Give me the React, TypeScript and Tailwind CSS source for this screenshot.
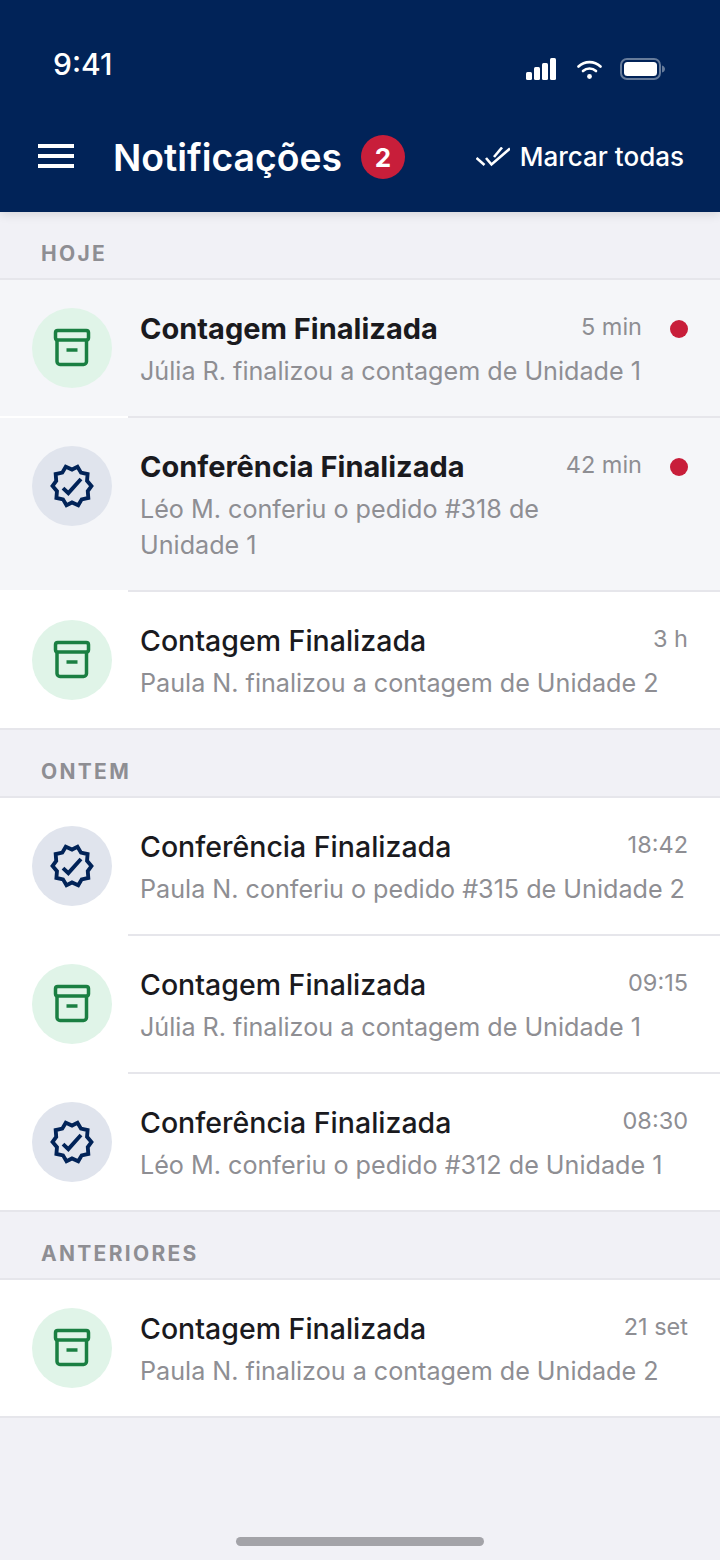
type Kind = "count" | "check";

interface Item {
  kind: Kind;
  title: string;
  desc: string;
  time: string;
  unread?: boolean;
  inset?: boolean;
}

const today: Item[] = [
  { kind: "count", title: "Contagem Finalizada", desc: "Júlia R. finalizou a contagem de Unidade 1", time: "5 min", unread: true, inset: true },
  { kind: "check", title: "Conferência Finalizada", desc: "Léo M. conferiu o pedido #318 de Unidade 1", time: "42 min", unread: true, inset: true },
  { kind: "count", title: "Contagem Finalizada", desc: "Paula N. finalizou a contagem de Unidade 2", time: "3 h" },
];

const yesterday: Item[] = [
  { kind: "check", title: "Conferência Finalizada", desc: "Paula N. conferiu o pedido #315 de Unidade 2", time: "18:42", inset: true },
  { kind: "count", title: "Contagem Finalizada", desc: "Júlia R. finalizou a contagem de Unidade 1", time: "09:15", inset: true },
  { kind: "check", title: "Conferência Finalizada", desc: "Léo M. conferiu o pedido #312 de Unidade 1", time: "08:30" },
];

const older: Item[] = [
  { kind: "count", title: "Contagem Finalizada", desc: "Paula N. finalizou a contagem de Unidade 2", time: "21 set" },
];

const BoxIcon = () => (
  <svg width="44" height="44" viewBox="0 0 44 44" fill="none" stroke="#1a7f42" strokeWidth="3.500">
    <rect x="5.500" y="4.500" width="33" height="9.500" rx="2.200" />
    <path d="M7 14v21.500a3 3 0 0 0 3 3h23.500a3 3 0 0 0 3-3V14" />
    <path d="M16.500 24h11" />
  </svg>
);

const SealCheck = () => (
  <svg width="44" height="44" viewBox="0 0 24 24" fill="none" stroke="#012358" strokeWidth="2.100" strokeLinejoin="miter">
    <path d="M22.600 12l-2.400-2.800.3-3.700-3.600-.8-1.900-3.200L12 3 8.600 1.500 6.700 4.700l-3.600.8.300 3.700L1.400 12l2.400 2.800-.3 3.700 3.600.8 1.900 3.200L12 21l3.400 1.500 1.900-3.200 3.600-.8-.3-3.700z" />
    <path d="M7.100 13.100l2.900 2.800 6.900-7.700" />
  </svg>
);

const Row = ({ item }: { item: Item }) => (
  <div className="bg-white">
    <div className={`flex px-[32px] pt-[28px] pb-[27px] ${item.unread ? "bg-[#f5f6f9]" : "bg-white"}`}>
      <div
        className={`flex h-[80px] w-[80px] shrink-0 items-center justify-center rounded-full ${
          item.kind === "count" ? "bg-[#e0f4e8]" : "bg-[#e0e4ed]"
        }`}
      >
        {item.kind === "count" ? <BoxIcon /> : <SealCheck />}
      </div>
      <div className="ml-[28px] mt-[2px] min-w-0 flex-1">
        <div className="flex items-start justify-between">
          <span
            className={`leading-[38px] text-[#1a1a1e] ${
              item.unread ? "text-[29px] font-bold" : "text-[28.5px] font-medium"
            }`}
          >
            {item.title}
          </span>
          <span className="mt-[-1px] text-[23.5px] leading-[36px] text-[#8e8e93]">{item.time}</span>
        </div>
        <p className="mt-[5px] text-[25.150px] leading-[36px] text-[#8e8e93]">{item.desc}</p>
      </div>
      {item.unread && <div className="ml-[28px] mt-[12px] h-[18px] w-[18px] shrink-0 rounded-full bg-[#c81e3a]" />}
    </div>
    {item.inset ? (
      <div className="h-[2px] bg-white">
        <div className="ml-[128px] h-[2px] bg-[#e6e6eb]" />
      </div>
    ) : (
      <div className="h-[2px] bg-[#e6e6eb]" />
    )}
  </div>
);

const Section = ({ label, items }: { label: string; items: Item[] }) => (
  <section>
    <div className="flex h-[68px] items-center border-b-2 border-[#e6e6eb] pl-[41px] pt-[17px]">
      <span className="text-[21px] font-bold tracking-[2.3px] text-[#8e8e93]">{label}</span>
    </div>
    {items.map((item, i) => (
      <Row key={i} item={item} />
    ))}
  </section>
);

export default function App() {
  return (
    <div className="flex min-h-[1560px] flex-col bg-[#f1f1f6] font-['Inter',sans-serif]">
      <header className="h-[212px] bg-[#012358] pt-[48px] text-white shadow-[0_2px_10px_rgba(0,0,0,0.12)]">
        <div className="flex h-[32px] items-center justify-between pl-[53px] pr-[54px]">
          <span className="text-[30px] font-medium">9:41</span>
          <div className="mt-[10px] flex items-center">
            <svg width="30" height="22" viewBox="0 0 30 22" fill="white">
              <rect x="0" y="14" width="6" height="8" rx="1.500" />
              <rect x="8" y="9" width="6" height="13" rx="1.500" />
              <rect x="16" y="5" width="6" height="17" rx="1.500" />
              <rect x="24" y="0" width="6" height="22" rx="1.500" />
            </svg>
            <svg className="ml-[21px]" width="25" height="19" viewBox="0 0 25 19" fill="none" stroke="white" strokeWidth="2.600" strokeLinecap="round">
              <path d="M1.500 6.500a16 16 0 0 1 22 0" />
              <path d="M6 11a9.500 9.500 0 0 1 13 0" />
              <circle cx="12.500" cy="16.500" r="2.400" fill="white" stroke="none" />
            </svg>
            <svg className="ml-[18px]" width="46" height="22" viewBox="0 0 46 22" fill="none">
              <rect x="1" y="1" width="39" height="20" rx="6" stroke="white" strokeOpacity="0.4" strokeWidth="2" />
              <rect x="4" y="4" width="33" height="14" rx="3.500" fill="white" />
              <path d="M42 7.500c2 .5 3 2 3 3.500s-1 3-3 3.500z" fill="white" fillOpacity="0.4" />
            </svg>
          </div>
        </div>
        <div className="mt-[41px] flex h-[72px] items-center pl-[38px] pr-[36px]">
          <div className="mt-[-2px] flex w-[36px] flex-col gap-[6px]">
            <div className="h-[4px] bg-white" />
            <div className="h-[4px] bg-white" />
            <div className="h-[4px] bg-white" />
          </div>
          <h1 className="ml-[39px] mt-[1px] text-[37.300px] font-semibold leading-[48px]">Notificações</h1>
          <span className="ml-[19px] flex h-[44px] w-[44px] items-center justify-center rounded-full bg-[#c81e3a] text-[26px] font-bold">
            2
          </span>
          <div className="ml-auto flex items-center gap-[10px]">
            <svg width="34" height="20" viewBox="0 0 34 20" fill="none" stroke="white" strokeWidth="2.600">
              <path d="M0.500 11l8 7" />
              <path d="M10 11l5.500 6.500L34 1.500" />
              <path d="M18 10l8-9.500" />
            </svg>
            <span className="text-[26px] font-medium leading-[32px]">Marcar todas</span>
          </div>
        </div>
      </header>

      <main>
        <Section label="HOJE" items={today} />
        <Section label="ONTEM" items={yesterday} />
        <Section label="ANTERIORES" items={older} />
      </main>

      <div className="mt-auto flex justify-center pb-[14px]">
        <div className="h-[9px] w-[248px] rounded-full bg-[#a3a3a8]" />
      </div>
    </div>
  );
}
